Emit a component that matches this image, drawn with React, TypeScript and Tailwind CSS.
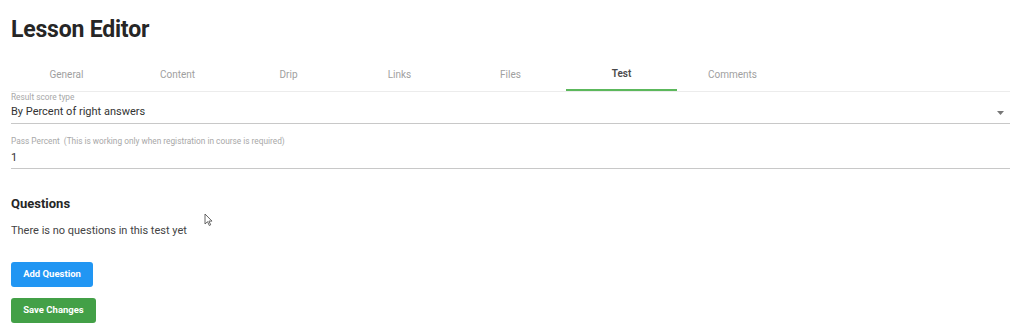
import React from "react";

const tabs = ["General", "Content", "Drip", "Links", "Files", "Test", "Comments"];

export default function App() {
  return (
    <div className="w-[1024px] h-[330px] bg-white overflow-hidden relative" style={{ fontFamily: "Roboto, 'Liberation Sans', sans-serif" }}>
      <div className="pl-[11px] pr-[14px]">
        <h1 className="pt-[16px] text-[23px] leading-[28px] font-bold text-[#262626] tracking-[-0.2px]">Lesson Editor</h1>
        <div className="mt-[13px] flex border-b border-[#ececec]">
          {tabs.map((t) => (
            <div
              key={t}
              className={
                t === "Test"
                  ? "w-[111px] h-[34px] flex items-center justify-center text-[10px] font-semibold text-[#4a4a4a] border-b-2 border-[#5cb85c] -mb-px"
                  : "w-[111px] h-[34px] flex items-center justify-center text-[10px] text-[#a0a0a0]"
              }
            >
              {t}
            </div>
          ))}
        </div>
        <div className="border-b border-[#c8c8c8]">
          <div className="pt-[1px] text-[8.3px] leading-[9px] text-[#a8a8a8]">Result score type</div>
          <div className="flex items-center justify-between h-[21px] pr-[6px]">
            <span className="text-[11px] text-[#333]">By Percent of right answers</span>
            <svg width="7" height="4" viewBox="0 0 7 4"><path d="M0 0h7L3.5 4z" fill="#777" /></svg>
          </div>
        </div>
        <div className="border-b border-[#c8c8c8] mt-[13px]">
          <div className="text-[8.3px] leading-[9px] text-[#a8a8a8]">Pass Percent&nbsp; (This is working only when registration in course is required)</div>
          <div className="h-[22px] flex items-center pt-[2px] text-[11px] text-[#333]">1</div>
        </div>
        <h2 className="mt-[27px] text-[13px] leading-[16px] font-bold text-[#262626]">Questions</h2>
        <p className="mt-[12px] text-[11px] leading-[14px] text-[#444]">There is no questions in this test yet</p>
        <button className="mt-[24px] w-[82px] h-[25px] rounded-[3px] bg-[#2196f3] text-white text-[9.5px] font-bold flex items-center justify-center">Add Question</button>
        <button className="mt-[11px] w-[85px] h-[25px] rounded-[3px] bg-[#43a047] text-white text-[9.5px] font-bold flex items-center justify-center">Save Changes</button>
      </div>
      <svg className="absolute left-[204px] top-[213px]" width="9" height="13" viewBox="0 0 9 13">
        <path d="M1 1v10l2.5-2.3 1.8 3.8 1.4-.7-1.8-3.7H8z" fill="white" stroke="#555" strokeWidth="0.9" strokeLinejoin="round" />
      </svg>
    </div>
  );
}
